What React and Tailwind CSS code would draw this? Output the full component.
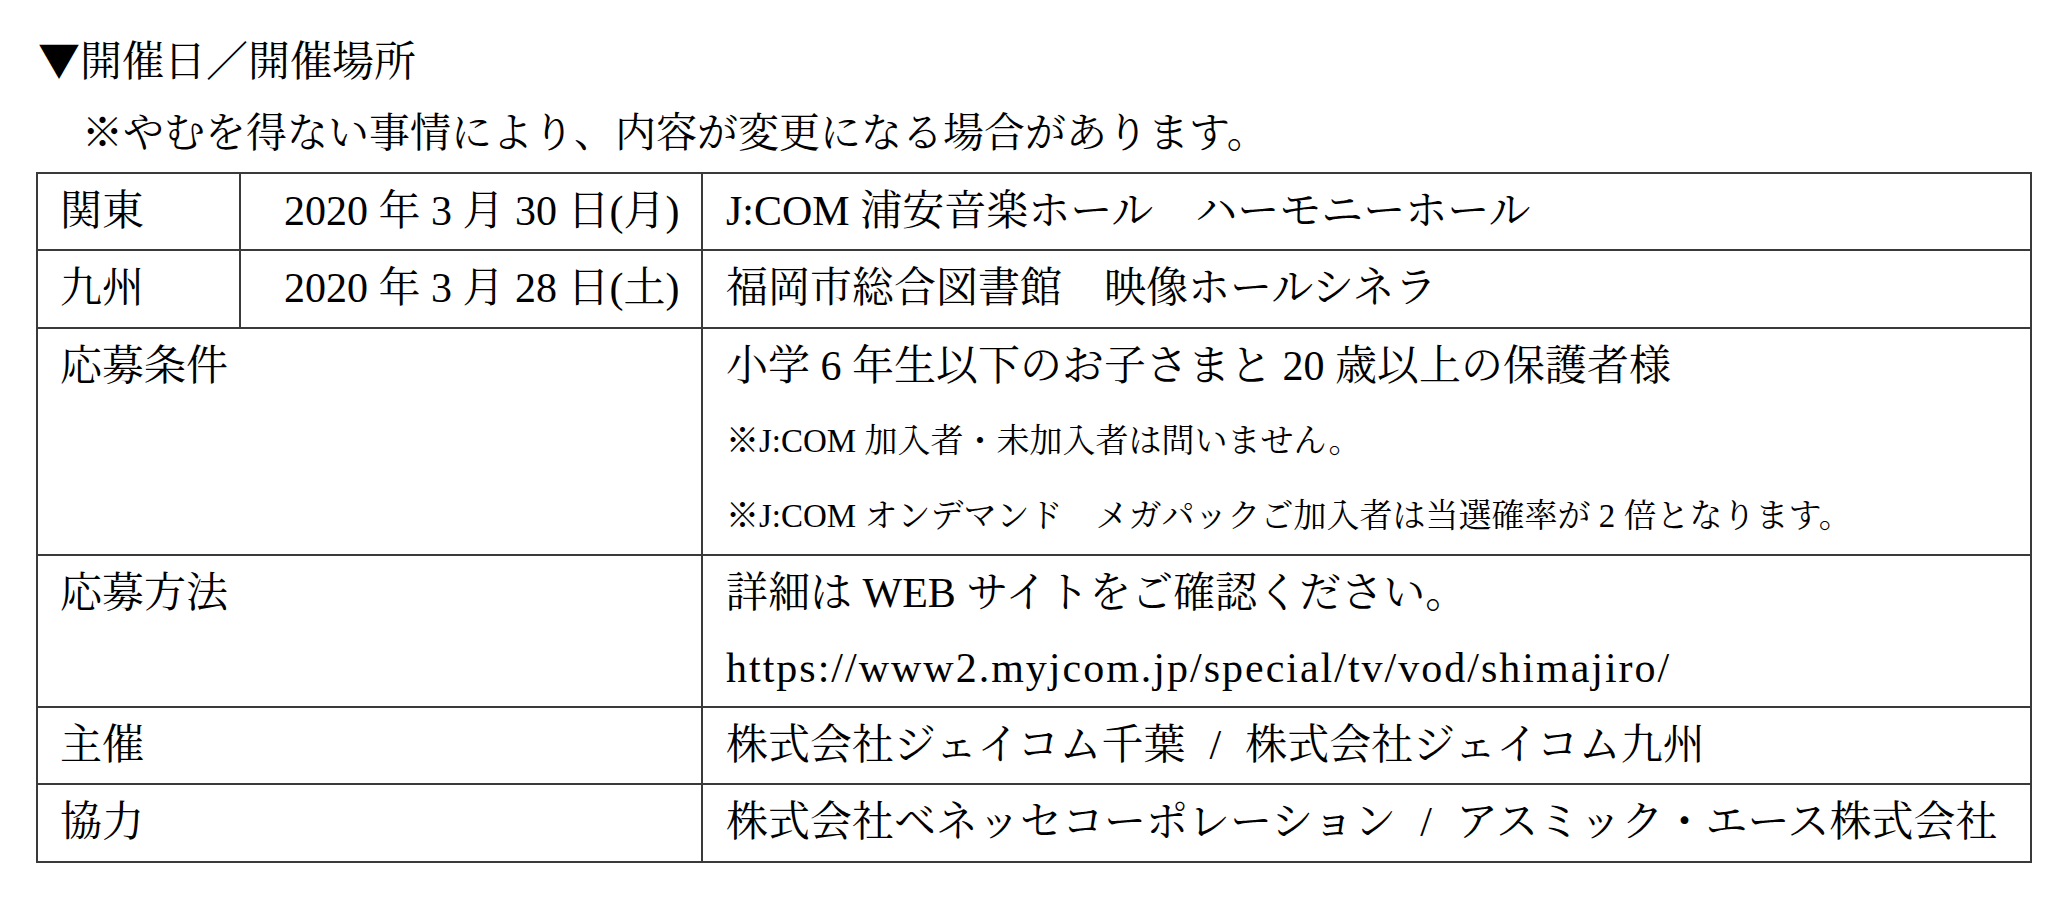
const rows = [
  { label: "関東", date: "2020 年 3 月 30 日(月)", lines: ["J:COM 浦安音楽ホール　ハーモニーホール"], h: "h-[75px]" },
  { label: "九州", date: "2020 年 3 月 28 日(土)", lines: ["福岡市総合図書館　映像ホールシネラ"], h: "h-[78px]" },
];

const wideRows = [
  {
    label: "応募条件",
    h: "h-[227px]",
    lines: [
      { text: "小学 6 年生以下のお子さまと 20 歳以上の保護者様" },
      { text: "※J:COM 加入者・未加入者は問いません。", small: true },
      { text: "※J:COM オンデマンド　メガパックご加入者は当選確率が 2 倍となります。", small: true },
    ],
  },
  {
    label: "応募方法",
    h: "h-[152px]",
    lines: [
      { text: "詳細は WEB サイトをご確認ください。" },
      { text: "https://www2.myjcom.jp/special/tv/vod/shimajiro/", url: true },
    ],
  },
  {
    label: "主催",
    h: "h-[77px]",
    lines: [{ text: ["株式会社ジェイコム千葉", "株式会社ジェイコム九州"] }],
  },
  {
    label: "協力",
    h: "h-[78px]",
    lines: [{ text: ["株式会社ベネッセコーポレーション", "アスミック・エース株式会社"] }],
  },
];

function Line({ line }) {
  const size = line.small ? "text-[33px]" : "text-[42px]";
  if (Array.isArray(line.text)) {
    return (
      <div className={`${size} h-[75px] leading-[75px] whitespace-nowrap`}>
        {line.text[0]}
        <span className="mx-[24px]">/</span>
        {line.text[1]}
      </div>
    );
  }
  return (
    <div className={`${size} ${line.url ? "tracking-[2px]" : ""} h-[75px] leading-[75px] whitespace-nowrap`}>
      {line.text}
    </div>
  );
}

export default function App() {
  return (
    <div className="min-h-[920px] w-[2069px] bg-white pl-[36px] pt-[28px] text-black font-['Liberation_Serif','Noto_Serif_CJK_JP','Noto_Sans_CJK_JP',serif]">
      <div className="h-[60px] pl-[2px] text-[42px] leading-[60px]">
        <span className="font-['Noto_Sans_CJK_JP',sans-serif]">▼</span>開催日／開催場所
      </div>
      <div className="mt-[15px] h-[60px] pl-[46px] text-[41px] leading-[60px]">
        ※やむを得ない事情により、内容が変更になる場合があります。
      </div>

      <div className="mt-[9px] w-[1996px] border-2 border-[#3a3a3a]">
        {rows.map((row, i) => (
          <div key={row.label} className={`flex ${row.h} ${i > 0 ? "border-t-2 border-[#3a3a3a]" : ""}`}>
            <div className="w-[203px] shrink-0 border-r-2 border-[#3a3a3a] pl-[22px] text-[42px] leading-[75px]">
              {row.label}
            </div>
            <div className="w-[462px] shrink-0 border-r-2 border-[#3a3a3a] pl-[43px] text-[42px] leading-[75px] whitespace-nowrap">
              {row.date}
            </div>
            <div className="flex-1 pl-[23px] text-[42px] leading-[75px] whitespace-nowrap">{row.lines[0]}</div>
          </div>
        ))}
        {wideRows.map((row) => (
          <div key={row.label} className={`flex ${row.h} border-t-2 border-[#3a3a3a]`}>
            <div className="w-[665px] shrink-0 border-r-2 border-[#3a3a3a] pl-[22px] text-[42px] leading-[75px]">
              {row.label}
            </div>
            <div className="flex flex-1 flex-col pl-[23px]">
              {row.lines.map((line, j) => (
                <Line key={j} line={line} />
              ))}
            </div>
          </div>
        ))}
      </div>
    </div>
  );
}
